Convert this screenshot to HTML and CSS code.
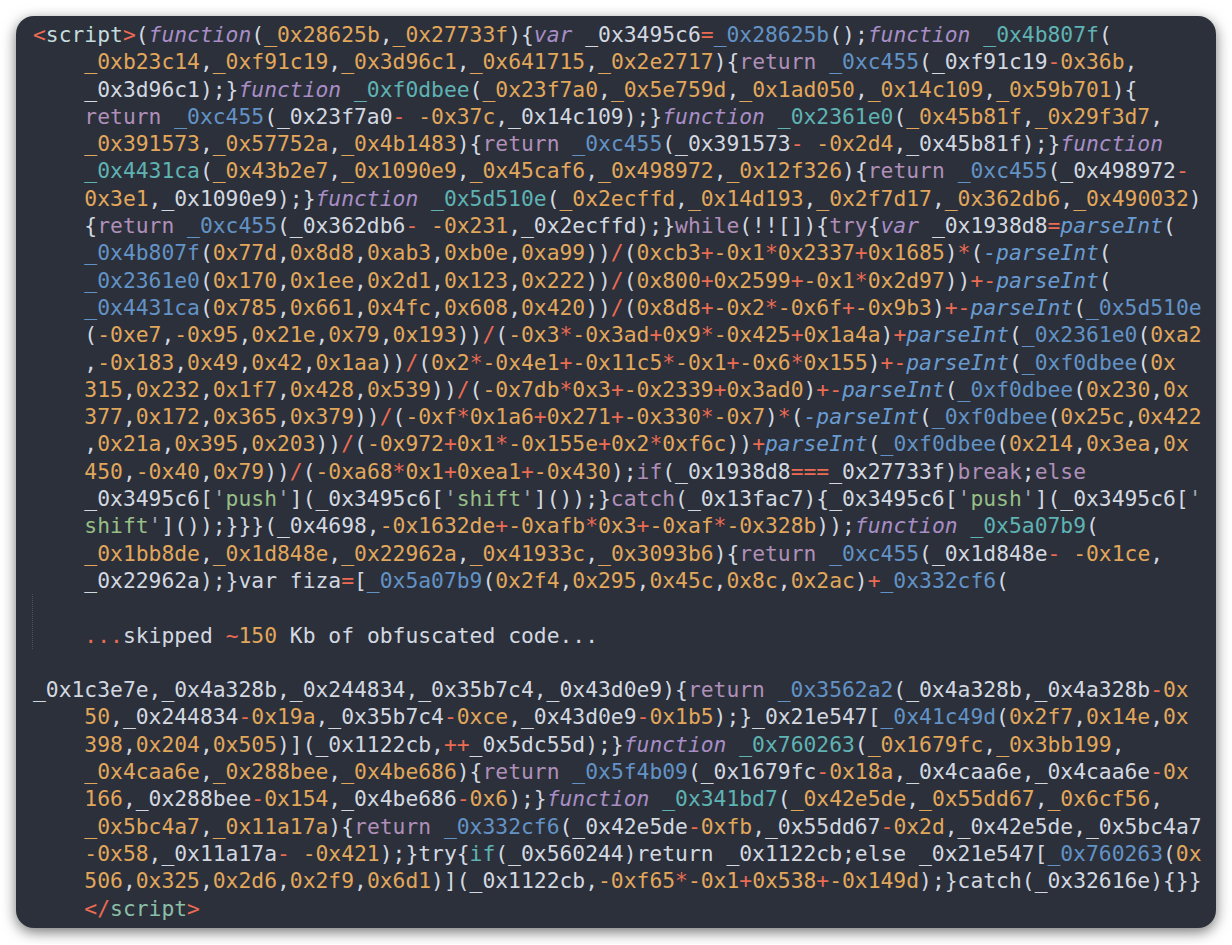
FILE: index.html
```html
<!DOCTYPE html>
<html>
<head>
<meta charset="utf-8">
<link rel="stylesheet" href="styles.css">
</head>
<body>
<div class="win">
<div class="code">
<div class="l"><span class="r">&lt;</span><span class="s">script</span><span class="r">&gt;</span>(<span class="k">function</span>(<span class="o">_0x28625b</span>,<span class="o">_0x27733f</span>){<span class="k">var</span> _0x3495c6<span class="r">=</span><span class="b">_0x28625b</span>();<span class="k">function</span> <span class="t">_0x4b807f</span>(</div>
<div class="l w"><span class="o">_0xb23c14</span>,<span class="o">_0xf91c19</span>,<span class="o">_0x3d96c1</span>,<span class="o">_0x641715</span>,<span class="o">_0x2e2717</span>){<span class="m">return</span> <span class="b">_0xc455</span>(_0xf91c19<span class="r">-</span><span class="o">0x36b</span>,</div>
<div class="l w">_0x3d96c1);}<span class="k">function</span> <span class="t">_0xf0dbee</span>(<span class="o">_0x23f7a0</span>,<span class="o">_0x5e759d</span>,<span class="o">_0x1ad050</span>,<span class="o">_0x14c109</span>,<span class="o">_0x59b701</span>){</div>
<div class="l w"><span class="m">return</span> <span class="b">_0xc455</span>(_0x23f7a0<span class="r">-</span> <span class="o">-0x37c</span>,_0x14c109);}<span class="k">function</span> <span class="t">_0x2361e0</span>(<span class="o">_0x45b81f</span>,<span class="o">_0x29f3d7</span>,</div>
<div class="l w"><span class="o">_0x391573</span>,<span class="o">_0x57752a</span>,<span class="o">_0x4b1483</span>){<span class="m">return</span> <span class="b">_0xc455</span>(_0x391573<span class="r">-</span> <span class="o">-0x2d4</span>,_0x45b81f);}<span class="k">function</span></div>
<div class="l w"><span class="t">_0x4431ca</span>(<span class="o">_0x43b2e7</span>,<span class="o">_0x1090e9</span>,<span class="o">_0x45caf6</span>,<span class="o">_0x498972</span>,<span class="o">_0x12f326</span>){<span class="m">return</span> <span class="b">_0xc455</span>(_0x498972<span class="r">-</span></div>
<div class="l w"><span class="o">0x3e1</span>,_0x1090e9);}<span class="k">function</span> <span class="t">_0x5d510e</span>(<span class="o">_0x2ecffd</span>,<span class="o">_0x14d193</span>,<span class="o">_0x2f7d17</span>,<span class="o">_0x362db6</span>,<span class="o">_0x490032</span>)</div>
<div class="l w">{<span class="m">return</span> <span class="b">_0xc455</span>(_0x362db6<span class="r">-</span> <span class="o">-0x231</span>,_0x2ecffd);}<span class="m">while</span>(!![]){<span class="m">try</span>{<span class="k">var</span> _0x1938d8<span class="r">=</span><span class="i">parseInt</span>(</div>
<div class="l w"><span class="b">_0x4b807f</span>(<span class="o">0x77d</span>,<span class="o">0x8d8</span>,<span class="o">0xab3</span>,<span class="o">0xb0e</span>,<span class="o">0xa99</span>))<span class="r">/</span>(<span class="o">0xcb3</span><span class="r">+</span><span class="o">-0x1</span><span class="r">*</span><span class="o">0x2337</span><span class="r">+</span><span class="o">0x1685</span>)<span class="r">*</span>(<span class="i">-parseInt</span>(</div>
<div class="l w"><span class="b">_0x2361e0</span>(<span class="o">0x170</span>,<span class="o">0x1ee</span>,<span class="o">0x2d1</span>,<span class="o">0x123</span>,<span class="o">0x222</span>))<span class="r">/</span>(<span class="o">0x800</span><span class="r">+</span><span class="o">0x2599</span><span class="r">+</span><span class="o">-0x1</span><span class="r">*</span><span class="o">0x2d97</span>))<span class="r">+-</span><span class="i">parseInt</span>(</div>
<div class="l w"><span class="b">_0x4431ca</span>(<span class="o">0x785</span>,<span class="o">0x661</span>,<span class="o">0x4fc</span>,<span class="o">0x608</span>,<span class="o">0x420</span>))<span class="r">/</span>(<span class="o">0x8d8</span><span class="r">+</span><span class="o">-0x2</span><span class="r">*</span><span class="o">-0x6f</span><span class="r">+</span><span class="o">-0x9b3</span>)<span class="r">+-</span><span class="i">parseInt</span>(<span class="b">_0x5d510e</span></div>
<div class="l w">(<span class="o">-0xe7</span>,<span class="o">-0x95</span>,<span class="o">0x21e</span>,<span class="o">0x79</span>,<span class="o">0x193</span>))<span class="r">/</span>(<span class="o">-0x3</span><span class="r">*</span><span class="o">-0x3ad</span><span class="r">+</span><span class="o">0x9</span><span class="r">*</span><span class="o">-0x425</span><span class="r">+</span><span class="o">0x1a4a</span>)<span class="r">+</span><span class="i">parseInt</span>(<span class="b">_0x2361e0</span>(<span class="o">0xa2</span></div>
<div class="l w">,<span class="o">-0x183</span>,<span class="o">0x49</span>,<span class="o">0x42</span>,<span class="o">0x1aa</span>))<span class="r">/</span>(<span class="o">0x2</span><span class="r">*</span><span class="o">-0x4e1</span><span class="r">+</span><span class="o">-0x11c5</span><span class="r">*</span><span class="o">-0x1</span><span class="r">+</span><span class="o">-0x6</span><span class="r">*</span><span class="o">0x155</span>)<span class="r">+-</span><span class="i">parseInt</span>(<span class="b">_0xf0dbee</span>(<span class="o">0x</span></div>
<div class="l w"><span class="o">315</span>,<span class="o">0x232</span>,<span class="o">0x1f7</span>,<span class="o">0x428</span>,<span class="o">0x539</span>))<span class="r">/</span>(<span class="o">-0x7db</span><span class="r">*</span><span class="o">0x3</span><span class="r">+</span><span class="o">-0x2339</span><span class="r">+</span><span class="o">0x3ad0</span>)<span class="r">+-</span><span class="i">parseInt</span>(<span class="b">_0xf0dbee</span>(<span class="o">0x230</span>,<span class="o">0x</span></div>
<div class="l w"><span class="o">377</span>,<span class="o">0x172</span>,<span class="o">0x365</span>,<span class="o">0x379</span>))<span class="r">/</span>(<span class="o">-0xf</span><span class="r">*</span><span class="o">0x1a6</span><span class="r">+</span><span class="o">0x271</span><span class="r">+</span><span class="o">-0x330</span><span class="r">*</span><span class="o">-0x7</span>)<span class="r">*</span>(<span class="i">-parseInt</span>(<span class="b">_0xf0dbee</span>(<span class="o">0x25c</span>,<span class="o">0x422</span></div>
<div class="l w">,<span class="o">0x21a</span>,<span class="o">0x395</span>,<span class="o">0x203</span>))<span class="r">/</span>(<span class="o">-0x972</span><span class="r">+</span><span class="o">0x1</span><span class="r">*</span><span class="o">-0x155e</span><span class="r">+</span><span class="o">0x2</span><span class="r">*</span><span class="o">0xf6c</span>))<span class="r">+</span><span class="i">parseInt</span>(<span class="b">_0xf0dbee</span>(<span class="o">0x214</span>,<span class="o">0x3ea</span>,<span class="o">0x</span></div>
<div class="l w"><span class="o">450</span>,<span class="o">-0x40</span>,<span class="o">0x79</span>))<span class="r">/</span>(<span class="o">-0xa68</span><span class="r">*</span><span class="o">0x1</span><span class="r">+</span><span class="o">0xea1</span><span class="r">+</span><span class="o">-0x430</span>);<span class="m">if</span>(_0x1938d8<span class="r">===</span>_0x27733f)<span class="m">break</span>;<span class="m">else</span></div>
<div class="l w">_0x3495c6[<span class="q">'</span><span class="g">push</span><span class="q">'</span>](_0x3495c6[<span class="q">'</span><span class="g">shift</span><span class="q">'</span>]());}<span class="m">catch</span>(_0x13fac7){_0x3495c6[<span class="q">'</span><span class="g">push</span><span class="q">'</span>](_0x3495c6[<span class="q">'</span></div>
<div class="l w"><span class="g">shift</span><span class="q">'</span>]());}}}(_0x4698,<span class="o">-0x1632de</span><span class="r">+</span><span class="o">-0xafb</span><span class="r">*</span><span class="o">0x3</span><span class="r">+</span><span class="o">-0xaf</span><span class="r">*</span><span class="o">-0x328b</span>));<span class="k">function</span> <span class="t">_0x5a07b9</span>(</div>
<div class="l w"><span class="o">_0x1bb8de</span>,<span class="o">_0x1d848e</span>,<span class="o">_0x22962a</span>,<span class="o">_0x41933c</span>,<span class="o">_0x3093b6</span>){<span class="m">return</span> <span class="b">_0xc455</span>(_0x1d848e<span class="r">-</span> <span class="o">-0x1ce</span>,</div>
<div class="l w">_0x22962a);}var fiza<span class="r">=</span>[<span class="b">_0x5a07b9</span>(<span class="o">0x2f4</span>,<span class="o">0x295</span>,<span class="o">0x45c</span>,<span class="o">0x8c</span>,<span class="o">0x2ac</span>)<span class="r">+</span><span class="b">_0x332cf6</span>(</div>
<div class="guide">
<div class="l"> </div>
<div class="l w"><span class="r">...</span>skipped <span class="r">~</span><span class="o">150</span> Kb of obfuscated code...</div>
</div>
<div class="l"> </div>
<div class="l">_0x1c3e7e,_0x4a328b,_0x244834,_0x35b7c4,_0x43d0e9){<span class="m">return</span> <span class="b">_0x3562a2</span>(_0x4a328b,_0x4a328b<span class="r">-</span><span class="o">0x</span></div>
<div class="l w"><span class="o">50</span>,_0x244834<span class="r">-</span><span class="o">0x19a</span>,_0x35b7c4<span class="r">-</span><span class="o">0xce</span>,_0x43d0e9<span class="r">-</span><span class="o">0x1b5</span>);}_0x21e547[<span class="b">_0x41c49d</span>(<span class="o">0x2f7</span>,<span class="o">0x14e</span>,<span class="o">0x</span></div>
<div class="l w"><span class="o">398</span>,<span class="o">0x204</span>,<span class="o">0x505</span>)](_0x1122cb,<span class="r">++</span>_0x5dc55d);}<span class="k">function</span> <span class="t">_0x760263</span>(<span class="o">_0x1679fc</span>,<span class="o">_0x3bb199</span>,</div>
<div class="l w"><span class="o">_0x4caa6e</span>,<span class="o">_0x288bee</span>,<span class="o">_0x4be686</span>){<span class="m">return</span> <span class="b">_0x5f4b09</span>(_0x1679fc<span class="r">-</span><span class="o">0x18a</span>,_0x4caa6e,_0x4caa6e<span class="r">-</span><span class="o">0x</span></div>
<div class="l w"><span class="o">166</span>,_0x288bee<span class="r">-</span><span class="o">0x154</span>,_0x4be686<span class="r">-</span><span class="o">0x6</span>);}<span class="k">function</span> <span class="t">_0x341bd7</span>(<span class="o">_0x42e5de</span>,<span class="o">_0x55dd67</span>,<span class="o">_0x6cf56</span>,</div>
<div class="l w"><span class="o">_0x5bc4a7</span>,<span class="o">_0x11a17a</span>){<span class="m">return</span> <span class="b">_0x332cf6</span>(_0x42e5de<span class="r">-</span><span class="o">0xfb</span>,_0x55dd67<span class="r">-</span><span class="o">0x2d</span>,_0x42e5de,_0x5bc4a7</div>
<div class="l w"><span class="o">-0x58</span>,_0x11a17a<span class="r">-</span> <span class="o">-0x421</span>);}try{<span class="t">if</span>(_0x560244)return _0x1122cb;else _0x21e547[<span class="b">_0x760263</span>(<span class="o">0x</span></div>
<div class="l w"><span class="o">506</span>,<span class="o">0x325</span>,<span class="o">0x2d6</span>,<span class="o">0x2f9</span>,<span class="o">0x6d1</span>)](_0x1122cb,<span class="o">-0xf65</span><span class="r">*</span><span class="o">-0x1</span><span class="r">+</span><span class="o">0x538</span><span class="r">+</span><span class="o">-0x149d</span>);}catch(_0x32616e){}}</div>
<div class="l w"><span class="r">&lt;/</span><span class="e">script</span><span class="r">&gt;</span></div>
</div>
</div>
</body>
</html>
```
FILE: styles.css
```css
html, body {
  margin: 0;
  padding: 0;
  background: #ffffff;
}

.win {
  margin: 16px;
  width: 1200px;
  height: 912px;
  box-sizing: border-box;
  background: #2b303b;
  border-radius: 18px;
  box-shadow: 0 4px 14px rgba(0, 0, 0, 0.55);
  padding: 5px 0 0 17px;
  overflow: hidden;
}

.code {
  font-family: "DejaVu Sans Mono", monospace;
  font-size: 21.33px;
  line-height: 27.3px;
  color: #d3d8e0;
}

.l {
  white-space: pre;
  height: 27.3px;
}

.w {
  padding-left: 4ch;
}

.guide {
  border-left: 1px dotted #4b525e;
  margin-left: -1px;
}

.o { color: #e2a75a; }
.r { color: #ec6b53; }
.t { color: #5fb3b3; }
.b { color: #6393c6; }
.k { color: #a98ec6; font-style: italic; }
.m { color: #b08fb8; }
.i { color: #6a9bd0; font-style: italic; }
.g { color: #97bf86; }
.q { color: #a0a7b2; }
.s { color: #c4dcdc; }
.e { color: #8cbfa8; }
```
